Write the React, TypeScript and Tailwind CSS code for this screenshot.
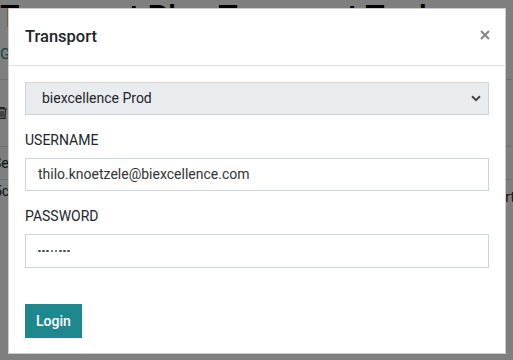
export default function App() {
  return (
    <div className="relative w-[513px] h-[360px] overflow-hidden bg-white text-[#212529] font-['Roboto','Liberation_Sans',sans-serif]">
      {/* page behind the dialog */}
      <div>
        <h1 className="-mt-[2px] h-[36px] whitespace-nowrap text-[32px] leading-[36px] font-medium text-black">
          Transport Plan Transport Tool
        </h1>
        <div className="mt-[10px] h-5 text-[15px] leading-5 text-[#1f8a8f]">Go back</div>
        <div className="mt-[15px] border-t border-[#dee2e6]">
          <div className="flex h-[67px] items-center border-b border-[#dee2e6]">
            <svg width="10" height="12" viewBox="0 0 10 12" className="-ml-[3px]" fill="none" stroke="#333" strokeWidth="1.2">
              <path d="M0 2h10M3 2V0.6h4V2M1.5 2l.6 9.4h5.8l.6-9.4M4 4v6M6 4v6" />
            </svg>
          </div>
          <div className="flex h-[33px] items-center border-b border-[#dee2e6] text-[14px]">
            <span className="-ml-[7px]">Server</span>
          </div>
          <div className="flex h-[30px] justify-between text-[14px]">
            <span className="-ml-[6px] mt-[1px]">5cd</span>
            <span className="-mr-[2px] mt-[7px]">Transport</span>
          </div>
        </div>
      </div>

      {/* backdrop */}
      <div className="absolute inset-0 bg-black/50">
        <div className="ml-2 mt-2 w-[498px] border border-black/20 bg-white">
          <div className="flex h-[57px] items-center justify-between border-b border-[#dee2e6] px-4">
            <h5 className="text-[16.5px] font-medium leading-6 text-[#212529]">Transport</h5>
            <svg width="10" height="10" viewBox="0 0 10 10" className="mr-[-1px] mt-[-4px]" stroke="#888" strokeWidth="2.2">
              <path d="M1 1l8 8M9 1l-8 8" />
            </svg>
          </div>
          <div className="px-4 pt-4 pb-[15px]">
            <div className="flex h-[33px] items-center justify-between border border-[#ced4da] bg-[#e9ecef] pl-4 pr-[7px] text-[14px] text-[#212529]">
              <span>biexcellence Prod</span>
              <svg width="10" height="7" viewBox="0 0 10 7" fill="none" stroke="#444" strokeWidth="2">
                <path d="M1 1.2l4 4 4-4" />
              </svg>
            </div>
            <label className="mt-[15px] mb-2 block text-[14px] leading-5 uppercase text-[#212529]">Username</label>
            <div className="flex h-[33px] items-center border border-[#ced4da] bg-white px-3 text-[14px] text-[#333]">
              thilo.knoetzele@biexcellence.com
            </div>
            <label className="mt-[15px] mb-2 block text-[14px] leading-5 uppercase text-[#212529]">Password</label>
            <div className="flex h-[34px] items-center gap-[1.6px] border border-[#ced4da] bg-white px-3">
              {[0, 1, 2, 3, 4, 5, 6, 7].map((i) => (
                <span key={i} className="h-[2.6px] w-[2.6px] rounded-full bg-[#495057]" />
              ))}
            </div>
            <button className="mt-9 h-[34px] bg-[#1f888e] px-[11px] text-[14px] font-medium text-white">
              Login
            </button>
          </div>
        </div>
      </div>
    </div>
  );
}
